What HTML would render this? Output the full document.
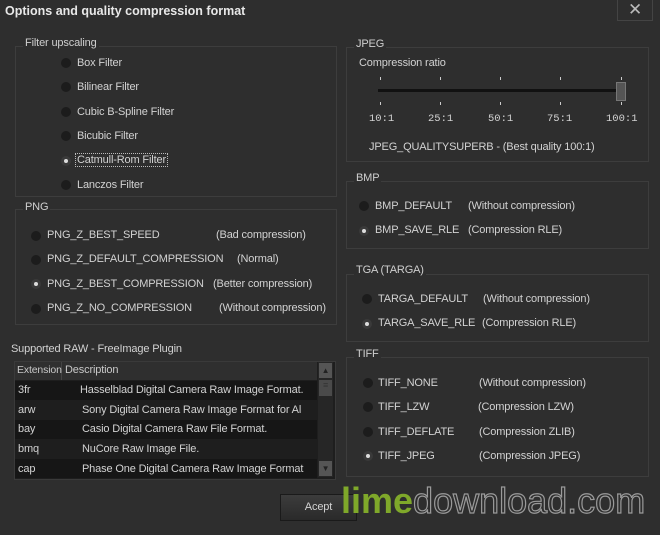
<!DOCTYPE html><html><head><style>
body{margin:0;width:660px;height:535px;background:#2e2e2e;font-family:"Liberation Sans",sans-serif;font-size:11px;letter-spacing:-0.15px;color:#d2d2d2;position:relative;overflow:hidden}
.a{position:absolute;white-space:nowrap}
.box{position:absolute;border:1px solid #3d3d3d}
.lg{position:absolute;background:#2e2e2e;padding:0 2px;color:#cfcfcf}
.r{position:absolute;width:10px;height:10px;border-radius:50%;background:#1c1c1c}
.r.on{background:#3a3a3a}
.r.on::after{content:"";position:absolute;left:3px;top:3px;width:4px;height:4px;border-radius:50%;background:#ddd}
.tk{position:absolute;width:1px;height:3px;background:#ccc}
.m{font-family:'Liberation Mono',monospace;font-size:10.5px;letter-spacing:0}
</style></head><body>
<div class="a" style="left:5px;top:4px;font-weight:bold;font-size:12.5px;letter-spacing:0;color:#e8e8e8">Options and quality compression format</div>
<div class="a" style="left:617px;top:0;width:34px;height:20px;border:1px solid #444;border-top:none;color:#bbb;font-size:17px;text-align:center;line-height:20px">✕</div>

<div class="box" style="left:15px;top:46px;width:320px;height:149px"></div>
<div class="lg" style="left:23px;top:37px">Filter upscaling</div>
<div class="r" style="left:61px;top:58px"></div><div class="a" style="left:77px;top:57px">Box Filter</div>
<div class="r" style="left:61px;top:82px"></div><div class="a" style="left:77px;top:81px">Bilinear Filter</div>
<div class="r" style="left:61px;top:107px"></div><div class="a" style="left:77px;top:106px">Cubic B-Spline Filter</div>
<div class="r" style="left:61px;top:131px"></div><div class="a" style="left:77px;top:130px">Bicubic Filter</div>
<div class="r on" style="left:61px;top:156px"></div><div class="a" style="left:76px;top:154px;outline:1px dotted #bbb;padding:0 1px">Catmull-Rom Filter</div>
<div class="r" style="left:61px;top:180px"></div><div class="a" style="left:77px;top:179px">Lanczos Filter</div>

<div class="box" style="left:15px;top:209px;width:320px;height:114px"></div>
<div class="lg" style="left:23px;top:201px">PNG</div>
<div class="r" style="left:31px;top:231px"></div><div class="a" style="left:47px;top:229px">PNG_Z_BEST_SPEED</div><div class="a" style="left:216px;top:229px">(Bad compression)</div>
<div class="r" style="left:31px;top:255px"></div><div class="a" style="left:47px;top:253px">PNG_Z_DEFAULT_COMPRESSION</div><div class="a" style="left:237px;top:253px">(Normal)</div>
<div class="r on" style="left:31px;top:279px"></div><div class="a" style="left:47px;top:278px">PNG_Z_BEST_COMPRESSION</div><div class="a" style="left:213px;top:278px">(Better compression)</div>
<div class="r" style="left:31px;top:304px"></div><div class="a" style="left:47px;top:302px">PNG_Z_NO_COMPRESSION</div><div class="a" style="left:219px;top:302px">(Without compression)</div>

<div class="a" style="left:11px;top:343px">Supported RAW - FreeImage Plugin</div>
<div class="a" style="left:14px;top:361px;width:320px;height:117px;background:#1e1e1e;border:1px solid #3a3a3a"></div>
<div class="a" style="left:15px;top:362px;width:302px;height:18px;background:#2f2f2f"></div>
<div class="a" style="left:61px;top:362px;width:1px;height:18px;background:#444"></div>
<div class="a" style="left:17px;top:364px;color:#c8c8c8;font-size:10.5px">Extension</div><div class="a" style="left:65px;top:364px;color:#c8c8c8">Description</div>
<div class="a" style="left:15px;top:381px;width:302px;height:19px;background:#161616"></div>
<div class="a" style="left:15px;top:420px;width:302px;height:19px;background:#161616"></div>
<div class="a" style="left:15px;top:459px;width:302px;height:19px;background:#161616"></div>
<div class="a" style="left:18px;top:384px">3fr</div><div class="a" style="left:80px;top:384px;width:237px;overflow:hidden">Hasselblad Digital Camera Raw Image Format.</div>
<div class="a" style="left:18px;top:404px">arw</div><div class="a" style="left:82px;top:404px;width:234px;overflow:hidden">Sony Digital Camera Raw Image Format for Al</div>
<div class="a" style="left:18px;top:423px">bay</div><div class="a" style="left:82px;top:423px">Casio Digital Camera Raw File Format.</div>
<div class="a" style="left:18px;top:443px">bmq</div><div class="a" style="left:82px;top:443px">NuCore Raw Image File.</div>
<div class="a" style="left:18px;top:463px">cap</div><div class="a" style="left:82px;top:463px;width:234px;overflow:hidden">Phase One Digital Camera Raw Image Format</div>
<div class="a" style="left:318px;top:362px;width:15px;height:115px;background:#262626"></div>
<div class="a" style="left:319px;top:363px;width:13px;height:15px;background:#555;color:#222;font-size:8px;text-align:center;line-height:15px">▲</div>
<div class="a" style="left:319px;top:380px;width:13px;height:16px;background:#4a4a4a;color:#333;font-size:9px;text-align:center">≡</div>
<div class="a" style="left:319px;top:461px;width:13px;height:15px;background:#555;color:#222;font-size:8px;text-align:center;line-height:15px">▼</div>

<div class="box" style="left:346px;top:47px;width:301px;height:113px"></div>
<div class="lg" style="left:354px;top:38px">JPEG</div>
<div class="a" style="left:359px;top:57px">Compression ratio</div>
<div class="a" style="left:378px;top:89px;width:244px;height:3px;background:#111"></div>
<div class="a" style="left:616px;top:82px;width:8px;height:17px;background:#555;border:1px solid #777"></div>
<div class="tk" style="left:380px;top:77px"></div><div class="tk" style="left:440px;top:77px"></div><div class="tk" style="left:500px;top:77px"></div><div class="tk" style="left:560px;top:77px"></div><div class="tk" style="left:621px;top:77px"></div>
<div class="tk" style="left:380px;top:102px"></div><div class="tk" style="left:440px;top:102px"></div><div class="tk" style="left:500px;top:102px"></div><div class="tk" style="left:560px;top:102px"></div><div class="tk" style="left:621px;top:102px"></div>
<div class="a m" style="left:369px;top:113px">10:1</div>
<div class="a m" style="left:428px;top:113px">25:1</div>
<div class="a m" style="left:488px;top:113px">50:1</div>
<div class="a m" style="left:547px;top:113px">75:1</div>
<div class="a m" style="left:606px;top:113px">100:1</div>
<div class="a" style="left:369px;top:141px">JPEG_QUALITYSUPERB - (Best quality 100:1)</div>

<div class="box" style="left:346px;top:181px;width:301px;height:66px"></div>
<div class="lg" style="left:354px;top:172px">BMP</div>
<div class="r" style="left:359px;top:201px"></div><div class="a" style="left:375px;top:200px">BMP_DEFAULT</div><div class="a" style="left:468px;top:200px">(Without compression)</div>
<div class="r on" style="left:359px;top:226px"></div><div class="a" style="left:375px;top:224px">BMP_SAVE_RLE</div><div class="a" style="left:468px;top:224px">(Compression RLE)</div>

<div class="box" style="left:346px;top:274px;width:301px;height:66px"></div>
<div class="lg" style="left:354px;top:264px">TGA (TARGA)</div>
<div class="r" style="left:362px;top:294px"></div><div class="a" style="left:378px;top:293px">TARGA_DEFAULT</div><div class="a" style="left:483px;top:293px">(Without compression)</div>
<div class="r on" style="left:362px;top:319px"></div><div class="a" style="left:378px;top:317px">TARGA_SAVE_RLE</div><div class="a" style="left:482px;top:317px">(Compression RLE)</div>

<div class="box" style="left:346px;top:357px;width:301px;height:118px"></div>
<div class="lg" style="left:354px;top:348px">TIFF</div>
<div class="r" style="left:363px;top:378px"></div><div class="a" style="left:378px;top:377px">TIFF_NONE</div><div class="a" style="left:479px;top:377px">(Without compression)</div>
<div class="r" style="left:363px;top:402px"></div><div class="a" style="left:378px;top:401px">TIFF_LZW</div><div class="a" style="left:478px;top:401px">(Compression LZW)</div>
<div class="r" style="left:363px;top:427px"></div><div class="a" style="left:378px;top:426px">TIFF_DEFLATE</div><div class="a" style="left:479px;top:426px">(Compression ZLIB)</div>
<div class="r on" style="left:363px;top:451px"></div><div class="a" style="left:378px;top:450px">TIFF_JPEG</div><div class="a" style="left:479px;top:450px">(Compression JPEG)</div>

<div class="a" style="left:280px;top:494px;width:75px;height:25px;background:linear-gradient(#3c3c3c,#2a2a2a);border:1px solid #1a1a1a;text-align:center;line-height:25px">Acept</div>
<div class="a" style="left:341px;top:480px;font-size:36px;letter-spacing:0;color:transparent"><span style="color:#7fa82a;font-weight:bold">lime</span><span style="-webkit-text-stroke:1.2px #9a9a9a">download.com</span></div>
</body></html>
